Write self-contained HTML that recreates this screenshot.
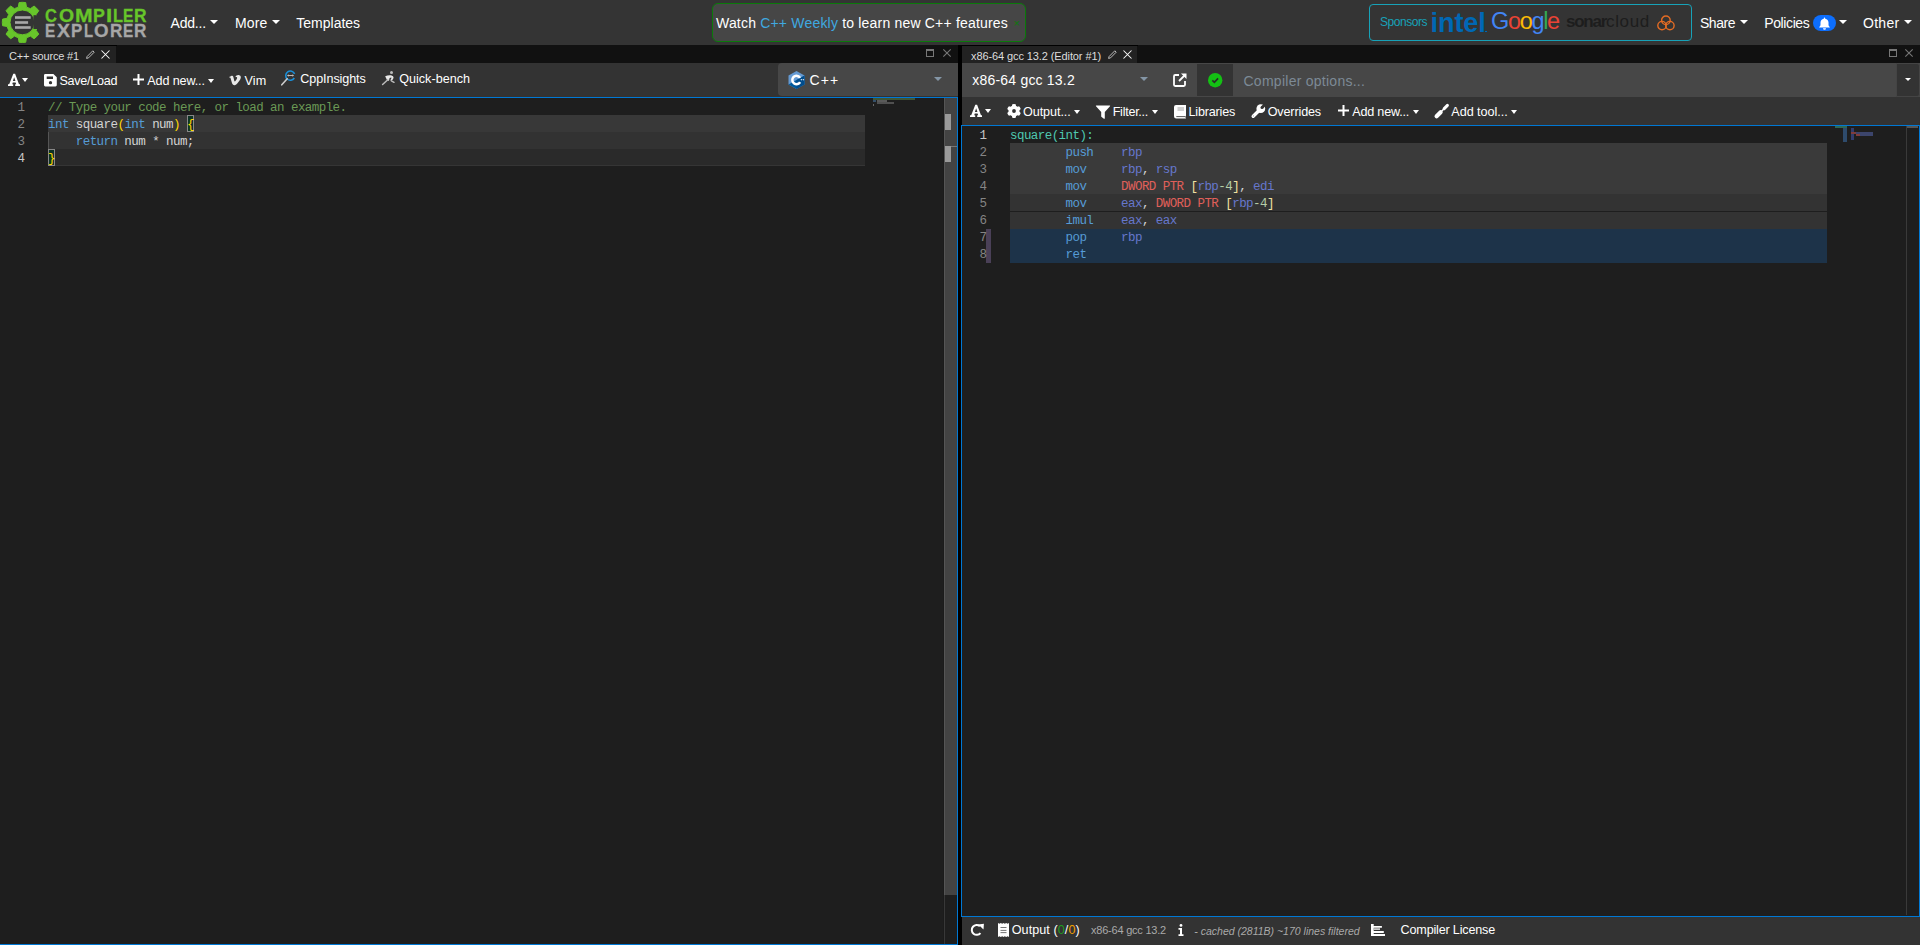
<!DOCTYPE html>
<html><head><meta charset="utf-8">
<style>
html,body{margin:0;padding:0}
body{width:1920px;height:945px;overflow:hidden;position:relative;background:#000;font-family:"Liberation Sans",sans-serif;color:#fff}
.a{position:absolute}
.t{position:absolute;white-space:pre;line-height:1}
.n14{font-size:14px}
.n12{font-size:12.6px}
.lg{font-size:18.5px;font-weight:700;transform-origin:0 0}
.car{position:absolute;width:0;height:0;border-left:4px solid transparent;border-right:4px solid transparent;border-top:4px solid #fff}
.code{position:absolute;font-family:"Liberation Mono",monospace;font-size:12.5px;letter-spacing:-0.56px;line-height:17px;white-space:pre;color:#d4d4d4}
.ln{position:absolute;font-family:"Liberation Mono",monospace;font-size:12.5px;line-height:17px;white-space:pre;color:#858585;text-align:right}
svg{position:absolute;overflow:visible}
</style></head><body>

<!-- NAVBAR -->
<div class="a" style="left:0;top:0;width:1920px;height:45px;background:#343434"></div>
<svg style="left:0;top:0" width="45" height="45" viewBox="0 0 45 45">
<path fill="#67c52a" stroke="#67c52a" stroke-width="1" stroke-linejoin="round" fill-rule="evenodd" d="M38.20,22.40 A15.8,15.8 0 0,0 36.08,14.50 L38.76,10.73 A20.1,20.1 0 0,0 34.07,6.04 L30.30,8.72 A15.8,15.8 0 0,0 26.49,7.14 L25.72,2.58 A20.1,20.1 0 0,0 19.08,2.58 L18.31,7.14 A15.8,15.8 0 0,0 14.50,8.72 L10.73,6.04 A20.1,20.1 0 0,0 6.04,10.73 L8.72,14.50 A15.8,15.8 0 0,0 7.14,18.31 L2.58,19.08 A20.1,20.1 0 0,0 2.58,25.72 L7.14,26.49 A15.8,15.8 0 0,0 8.72,30.30 L6.04,34.07 A20.1,20.1 0 0,0 10.73,38.76 L14.50,36.08 A15.8,15.8 0 0,0 18.31,37.66 L19.08,42.22 A20.1,20.1 0 0,0 25.72,42.22 L26.49,37.66 A15.8,15.8 0 0,0 30.30,36.08 L34.07,38.76 A20.1,20.1 0 0,0 38.76,34.07 L36.08,30.30 A15.8,15.8 0 0,0 38.20,22.40 Z M34.80,22.4 A12.4,12.4 0 1,1 10.00,22.4 A12.4,12.4 0 1,1 34.80,22.4 Z"/>
<rect x="33.5" y="15.2" width="10" height="13.8" fill="#343434"/>
<rect x="15" y="16.2" width="15.7" height="2.6" fill="#a8a8a8"/>
<rect x="15" y="21.2" width="13.1" height="2.6" fill="#a8a8a8"/>
<rect x="15" y="26.2" width="15.7" height="2.6" fill="#a8a8a8"/>
</svg>
<div class="t lg" style="left:45.44px;top:6.56px;color:#67c52a;-webkit-text-stroke:0.3px #67c52a;transform:scaleX(0.890)">C</div>
<div class="t lg" style="left:58.71px;top:6.56px;color:#67c52a;-webkit-text-stroke:0.3px #67c52a;transform:scaleX(1.051)">O</div>
<div class="t lg" style="left:75.07px;top:6.56px;color:#67c52a;-webkit-text-stroke:0.3px #67c52a;transform:scaleX(1.145)">M</div>
<div class="t lg" style="left:93.40px;top:6.56px;color:#67c52a;-webkit-text-stroke:0.3px #67c52a;transform:scaleX(0.958)">P</div>
<div class="t lg" style="left:106.23px;top:6.56px;color:#67c52a;-webkit-text-stroke:0.3px #67c52a;transform:scaleX(1.206)">I</div>
<div class="t lg" style="left:113.06px;top:6.56px;color:#67c52a;-webkit-text-stroke:0.3px #67c52a;transform:scaleX(0.881)">L</div>
<div class="t lg" style="left:122.97px;top:6.56px;color:#67c52a;-webkit-text-stroke:0.3px #67c52a;transform:scaleX(0.844)">E</div>
<div class="t lg" style="left:134.23px;top:6.56px;color:#67c52a;-webkit-text-stroke:0.3px #67c52a;transform:scaleX(0.939)">R</div>
<div class="t lg" style="left:44.95px;top:21.8px;color:#a6a6a6;-webkit-text-stroke:0.3px #a6a6a6;transform:scaleX(0.828)">E</div>
<div class="t lg" style="left:56.82px;top:21.8px;color:#a6a6a6;-webkit-text-stroke:0.3px #a6a6a6;transform:scaleX(1.051)">X</div>
<div class="t lg" style="left:71.39px;top:21.8px;color:#a6a6a6;-webkit-text-stroke:0.3px #a6a6a6;transform:scaleX(0.911)">P</div>
<div class="t lg" style="left:83.96px;top:21.8px;color:#a6a6a6;-webkit-text-stroke:0.3px #a6a6a6;transform:scaleX(0.807)">L</div>
<div class="t lg" style="left:94.04px;top:21.8px;color:#a6a6a6;-webkit-text-stroke:0.3px #a6a6a6;transform:scaleX(1.011)">O</div>
<div class="t lg" style="left:110.10px;top:21.8px;color:#a6a6a6;-webkit-text-stroke:0.3px #a6a6a6;transform:scaleX(0.928)">R</div>
<div class="t lg" style="left:122.95px;top:21.8px;color:#a6a6a6;-webkit-text-stroke:0.3px #a6a6a6;transform:scaleX(0.831)">E</div>
<div class="t lg" style="left:134.20px;top:21.8px;color:#a6a6a6;-webkit-text-stroke:0.3px #a6a6a6;transform:scaleX(0.928)">R</div>

<div class="t n14" style="left:170.5px;top:16.2px;letter-spacing:-0.18px">Add...</div>
<div class="car" style="left:210px;top:20px"></div>
<div class="t n14" style="left:235px;top:16.2px;letter-spacing:0.15px">More</div>
<div class="car" style="left:272px;top:20px"></div>
<div class="t n14" style="left:296.3px;top:16.2px">Templates</div>

<div class="a" style="left:712px;top:3px;width:312px;height:37px;border:1px solid #0a7a0a;border-radius:6px;background:#464646"></div>
<div class="t n14" style="left:716px;top:16.2px;letter-spacing:0.19px">Watch <span style="color:#3fa9e0">C++ Weekly</span> to learn new C++ features</div>
<div class="t" style="left:1013.5px;top:18px;font-size:11px;color:#0a7a0a">×</div>

<div class="a" style="left:1369px;top:4px;width:321px;height:35px;border:1px solid #17a2b8;border-radius:4px"></div>
<div class="t" style="left:1380px;top:15.6px;font-size:12px;color:#17a2b8;letter-spacing:-0.46px">Sponsors</div>
<div class="t" style="left:1430.5px;top:9.6px;font-size:27px;font-weight:700;color:#0068b5;letter-spacing:-0.05px">intel</div>
<div class="t" style="left:1491px;top:9.8px;font-size:23.5px;letter-spacing:-1.35px"><span style="color:#4285f4">G</span><span style="color:#ea4335">o</span><span style="color:#fbbc05">o</span><span style="color:#4285f4">g</span><span style="color:#34a853">l</span><span style="color:#ea4335">e</span></div>
<div class="a" style="left:1485px;top:30.8px;width:1.6px;height:1.6px;background:#0068b5"></div>
<div class="t" style="left:1566px;top:13.2px;font-size:17px;color:#1d1d1d"><span style="font-weight:700;letter-spacing:-1.26px">sonar</span><span style="letter-spacing:0.67px">cloud</span></div>

<svg style="left:1657px;top:14.5px" width="19" height="15" viewBox="0 0 19 15"><g fill="none" stroke="#e46c24" stroke-width="1.4"><circle cx="8.9" cy="5.3" r="4.3"/><circle cx="5" cy="10.6" r="4.2"/><circle cx="12.9" cy="10.6" r="4.2"/></g></svg>
<div class="t n14" style="left:1700px;top:16.2px;letter-spacing:-0.47px">Share</div>
<div class="car" style="left:1740px;top:20px"></div>
<div class="t n14" style="left:1764.3px;top:16.2px;letter-spacing:-0.4px">Policies</div>
<div class="a" style="left:1813px;top:15px;width:23px;height:16px;border-radius:8px;background:#0d6efd"></div>
<svg style="left:1818px;top:16.5px" width="13" height="13" viewBox="0 0 13 13"><path fill="#fff" d="M6.5,0.5 C6.9,0.5 7.2,0.8 7.2,1.2 V1.7 C9.2,2 10.5,3.6 10.5,5.6 V7.5 C10.5,8.5 11,9.4 11.8,10 V10.6 H1.2 V10 C2,9.4 2.5,8.5 2.5,7.5 V5.6 C2.5,3.6 3.8,2 5.8,1.7 V1.2 C5.8,0.8 6.1,0.5 6.5,0.5 Z M5,11.3 H8 A1.5,1.5 0 0 1 5,11.3 Z"/></svg>
<div class="car" style="left:1839px;top:20px"></div>
<div class="t n14" style="left:1863px;top:16.2px;letter-spacing:0.28px">Other</div>
<div class="car" style="left:1904px;top:20px"></div>

<!-- LEFT PANE -->
<div class="a" style="left:0;top:45px;width:958px;height:18px;background:#111"></div>
<div class="a" style="left:0;top:45px;width:117px;height:1px;background:#000"></div>
<div class="a" style="left:0;top:46px;width:116px;height:17px;background:#222"></div>
<div class="t" style="left:9px;top:50.7px;font-size:11px;color:#ddd;letter-spacing:-0.17px">C++ source #1</div>
<div class="a" style="left:0;top:63px;width:958px;height:34px;background:#333"></div>
<div class="a" style="left:778px;top:63px;width:180px;height:33px;background:#474747;border-radius:4px 0 0 4px"></div>


<!-- left toolbar -->
<svg style="left:7px;top:73px" width="14" height="14" viewBox="0 0 14 14"><path fill="#fff" fill-rule="evenodd" d="M6.3,0.8 L8.1,0.8 L12.0,11.2 L13.0,11.2 L13.0,13.0 L8.2,13.0 L8.2,11.2 L9.2,11.2 L8.6,9.4 L5.8,9.4 L5.2,11.2 L6.2,11.2 L6.2,13.0 L1.0,13.0 L1.0,11.2 L2.2,11.2 Z M5.9,8 L8.4,8 L7.15,4.3 Z"/></svg>
<div class="car" style="left:22px;top:78px;border-width:4px 3px 0 3px"></div>
<svg style="left:44px;top:73.8px" width="13" height="12.4" viewBox="0 0 13 12.4"><path fill="#fff" fill-rule="evenodd" d="M1.3,0 H9.4 L12.8,3.3 V11.1 A1.3,1.3 0 0 1 11.5,12.4 H1.3 A1.3,1.3 0 0 1 0,11.1 V1.3 A1.3,1.3 0 0 1 1.3,0 Z M2.7,2.4 V5.1 H9 V2.4 Z M6.5,7 A1.65,1.65 0 1 0 6.5,10.3 A1.65,1.65 0 1 0 6.5,7 Z"/></svg>
<div class="t n12" style="left:59.5px;top:74.9px;letter-spacing:-0.28px">Save/Load</div>
<svg style="left:133px;top:74px" width="11" height="11" viewBox="0 0 11 11"><path fill="#fff" d="M4.5,0 H6.5 V4.5 H11 V6.5 H6.5 V11 H4.5 V6.5 H0 V4.5 H4.5 Z"/></svg>
<div class="t n12" style="left:147.3px;top:75.0px;letter-spacing:-0.13px">Add new...</div>
<div class="car" style="left:208px;top:79px;border-width:4px 3px 0 3px"></div>
<svg style="left:229px;top:74.6px" width="12" height="10.4" viewBox="0 0 12 11" preserveAspectRatio="none"><path fill="#e8e8e8" d="M0.2,2.2 C1.5,1.2 2.6,0.6 3.2,0.7 C4.3,0.8 4.5,2.4 4.8,4 C5.1,5.7 5.4,6.8 5.9,6.8 C6.4,6.8 8,4.5 8.1,3.3 C8.2,2.1 7.3,1.9 6.3,2.4 C6.9,0.4 8.6,-0.2 10.3,0.2 C12,0.6 12.2,2.4 11.4,4.3 C10.4,6.6 7.6,10.5 5.6,10.9 C3.4,11.2 2.9,8.4 2.3,6.2 C1.8,4.2 1.6,2.6 1,2.6 C0.8,2.6 0.5,2.8 0.5,2.8 Z"/></svg>
<div class="t n12" style="left:244.4px;top:74.7px;letter-spacing:0.18px">Vim</div>
<svg style="left:281px;top:70px" width="15" height="16" viewBox="0 0 15 16"><path d="M13.6,3.9 A4.6,4.6 0 1 0 13.3,8" fill="none" stroke="#1a8fd8" stroke-width="1.6"/><path d="M7,5.5 H12 M7.3,4.6 L6.6,5.5 L7.3,6.4 M11.7,4.6 L12.4,5.5 L11.7,6.4" stroke="#ddd" stroke-width="0.8" fill="none"/><path d="M6.2,8.8 L0.8,14.8" stroke="#ccc" stroke-width="1.6" stroke-linecap="round"/></svg>
<div class="t n12" style="left:300.3px;top:73.0px;letter-spacing:-0.1px">CppInsights</div>
<svg style="left:378px;top:66px" width="22" height="24" viewBox="0 0 22 24"><circle cx="13.5" cy="6.4" r="1.5" fill="#bbb"/><path fill="#e8e8e8" d="M7.2,10.3 Q10,8.9 13,9.3 Q15.8,9.8 15.6,11.8 Q15.2,13.6 13.2,14.8 L12.2,14.2 Q13.6,12.8 13.4,11.6 L11.6,12 L11,14.8 L9.2,14.6 Q8.2,12.6 7.2,10.3 Z"/><path d="M9.8,13.8 L4.6,18.5 M13.4,14.8 L16,16.3" stroke="#bbb" stroke-width="1.5" stroke-linecap="round"/></svg>
<div class="t n12" style="left:399.2px;top:73.0px;letter-spacing:0.01px">Quick-bench</div>

<svg style="left:788px;top:71px" width="17" height="18" viewBox="0 0 17 18"><path fill="#659ad2" d="M8.5,0 L16.5,4.5 V13.5 L8.5,18 L0.5,13.5 V4.5 Z"/><path fill="#00599c" d="M16.5,4.5 V13.5 L8.5,18 L0.5,13.5 Z"/><path fill="#004482" d="M8.5,18 L16.5,13.5 V4.5 L8.5,9 Z" opacity="0.6"/><path fill="#fff" d="M8.5,3.6 A5.4,5.4 0 1 0 13.2,11.7 L11,10.4 A2.9,2.9 0 1 1 11,7.6 L13.2,6.3 A5.4,5.4 0 0 0 8.5,3.6 Z"/><path fill="#fff" d="M12.6,8.6 h0.5 v-0.5 h0.5 v0.5 h0.5 v0.5 h-0.5 v0.5 h-0.5 v-0.5 h-0.5 Z M14.6,8.6 h0.5 v-0.5 h0.5 v0.5 h0.5 v0.5 h-0.5 v0.5 h-0.5 v-0.5 h-0.5 Z"/></svg>
<div class="t n14" style="left:809.5px;top:72.9px;letter-spacing:1.16px">C++</div>
<div class="car" style="left:934px;top:77px;border-width:4px 4.5px 0 4.5px;border-top-color:#8496a6"></div>
<div class="a" style="left:926px;top:49px;width:6px;height:5px;border:1px solid #777;border-top-width:2px"></div>
<svg style="left:943px;top:49px" width="8" height="8" viewBox="0 0 8 8"><path d="M0.3,0.3 L7.7,7.7 M7.7,0.3 L0.3,7.7" stroke="#777" stroke-width="1.1"/></svg>
<svg style="left:86px;top:49.5px" width="9" height="9" viewBox="0 0 9 9"><path d="M6.8,0.8 L8.2,2.2 L2.5,7.9 L0.6,8.4 L1.1,6.5 Z" fill="none" stroke="#ccc" stroke-width="0.9"/></svg>
<svg style="left:101px;top:50px" width="9" height="9" viewBox="0 0 9 9"><path d="M0.5,0.5 L8.5,8.5 M8.5,0.5 L0.5,8.5" stroke="#fff" stroke-width="1.05"/></svg>

<!-- left editor -->
<div class="a" style="left:-1px;top:97px;width:957px;height:846px;border:1px solid #0078d4;background:#1e1e1e"></div>


<!-- left code -->
<div class="a" style="left:48px;top:115px;width:817px;height:17px;background:#383838"></div>
<div class="a" style="left:48px;top:132px;width:817px;height:17px;background:#323232"></div>
<div class="a" style="left:48px;top:149px;width:817px;height:16px;background:#2a2a2a;border-bottom:1px solid #353535"></div>
<div class="a" style="left:48px;top:132px;width:1px;height:17px;background:#555"></div>
<div class="a" style="left:187px;top:115px;width:5px;height:15px;border:1px solid #888;background:#0f3325"></div>
<div class="a" style="left:48px;top:149px;width:5px;height:15px;border:1px solid #888;background:#0f3325"></div>
<div class="ln" style="left:0;top:100.2px;width:25px">1
2
3
<span style="color:#c6c6c6">4</span></div>
<div class="code" style="left:48px;top:100.2px"><span style="color:#6a9955">// Type your code here, or load an example.</span>
<span style="color:#569cd6">int</span> square<span style="color:#ffd700">(</span><span style="color:#569cd6">int</span> num<span style="color:#ffd700">)</span> <span style="color:#ffd700">{</span>
    <span style="color:#569cd6">return</span> num * num;
<span style="color:#ffd700">}</span></div>
<!-- left minimap + scrollbar -->
<div class="a" style="left:944px;top:98px;width:13px;height:797px;background:#434343"></div>
<div class="a" style="left:943px;top:98px;width:1px;height:846px;background:#1b1b1b"></div>
<div class="a" style="left:944px;top:98px;width:1px;height:797px;background:#555"></div>
<div class="a" style="left:944px;top:895px;width:1px;height:49px;background:#383838"></div>
<div class="a" style="left:945px;top:114px;width:6px;height:16px;background:#9a9a9a"></div>
<div class="a" style="left:945px;top:146px;width:6px;height:16px;background:#9a9a9a"></div>
<div class="a" style="left:951px;top:146px;width:6px;height:1px;background:#777"></div>
<div class="a" style="left:873px;top:98px;width:42px;height:2px;background:#3f5535"></div>
<div class="a" style="left:873px;top:100px;width:3px;height:2px;background:#35506a"></div>
<div class="a" style="left:877px;top:100px;width:10px;height:2px;background:#5a5a5a"></div>
<div class="a" style="left:877px;top:102px;width:17px;height:2px;background:#505050"></div>
<div class="a" style="left:873px;top:104px;width:1px;height:2px;background:#666"></div>
<!-- splitter -->
<div class="a" style="left:958px;top:45px;width:4px;height:900px;background:#000"></div>

<!-- RIGHT PANE -->
<div class="a" style="left:962px;top:45px;width:958px;height:18px;background:#111"></div>
<div class="a" style="left:962px;top:45px;width:176px;height:1px;background:#000"></div>
<div class="a" style="left:962px;top:46px;width:175px;height:17px;background:#222"></div>
<div class="t" style="left:971px;top:50.5px;font-size:11px;color:#ddd;letter-spacing:-0.1px">x86-64 gcc 13.2 (Editor #1)</div>
<div class="a" style="left:962px;top:63px;width:958px;height:34px;background:#474747"></div>
<div class="a" style="left:962px;top:97px;width:958px;height:28px;background:#333"></div>

<!-- right tab icons -->
<svg style="left:1108px;top:49.5px" width="9" height="9" viewBox="0 0 9 9"><path d="M6.8,0.8 L8.2,2.2 L2.5,7.9 L0.6,8.4 L1.1,6.5 Z" fill="none" stroke="#ccc" stroke-width="0.9"/></svg>
<svg style="left:1123px;top:50px" width="9" height="9" viewBox="0 0 9 9"><path d="M0.5,0.5 L8.5,8.5 M8.5,0.5 L0.5,8.5" stroke="#fff" stroke-width="1.05"/></svg>
<div class="a" style="left:1889px;top:49px;width:6px;height:5px;border:1px solid #777;border-top-width:2px"></div>
<svg style="left:1905px;top:49px" width="8" height="8" viewBox="0 0 8 8"><path d="M0.3,0.3 L7.7,7.7 M7.7,0.3 L0.3,7.7" stroke="#777" stroke-width="1.1"/></svg>
<!-- compiler bar -->
<div class="t n14" style="left:972.3px;top:72.9px;letter-spacing:0.2px">x86-64 gcc 13.2</div>
<div class="car" style="left:1140px;top:77px;border-width:4px 4px 0 4px;border-top-color:#8496a6"></div>
<svg style="left:1173px;top:73px" width="14" height="14" viewBox="0 0 14 14"><path d="M6,2 H2.2 A1.2,1.2 0 0 0 1,3.2 V11.8 A1.2,1.2 0 0 0 2.2,13 H10.8 A1.2,1.2 0 0 0 12,11.8 V8" fill="none" stroke="#fff" stroke-width="1.8"/><path d="M8,0.5 H13.5 V6 Z" fill="#fff"/><path d="M12.5,1.5 L6,8" stroke="#fff" stroke-width="1.8"/></svg>
<div class="a" style="left:1197px;top:64px;width:36px;height:32px;background:#333"></div>
<svg style="left:1208px;top:72.8px" width="14.4" height="14.4" viewBox="0 0 14 14"><circle cx="7" cy="7" r="7" fill="#14c014"/><path d="M4.2,7.2 L6.2,9 L9.8,5.2" fill="none" stroke="#2a2a2a" stroke-width="1.6"/></svg>
<div class="t n14" style="left:1243.5px;top:73.8px;letter-spacing:0.26px;color:#7d8a96">Compiler options...</div>
<div class="a" style="left:1896px;top:63px;width:22px;height:32px;background:#333;border:1px solid #444;border-radius:0 3px 3px 0"></div>
<div class="car" style="left:1905px;top:78px;border-width:3.5px 3.5px 0 3.5px"></div>
<!-- toolbar 2 -->
<svg style="left:969px;top:104px" width="14" height="14" viewBox="0 0 14 14"><path fill="#fff" fill-rule="evenodd" d="M6.3,0.8 L8.1,0.8 L12.0,11.2 L13.0,11.2 L13.0,13.0 L8.2,13.0 L8.2,11.2 L9.2,11.2 L8.6,9.4 L5.8,9.4 L5.2,11.2 L6.2,11.2 L6.2,13.0 L1.0,13.0 L1.0,11.2 L2.2,11.2 Z M5.9,8 L8.4,8 L7.15,4.3 Z"/></svg>
<div class="car" style="left:985px;top:109px;border-width:4px 3px 0 3px"></div>
<svg style="left:1006.5px;top:104px" width="14" height="14" viewBox="0 0 14 14"><path fill="#fff" fill-rule="evenodd" d="M9.06,1.90 L8.69,0.21 A7.0,7.0 0 0,0 5.31,0.21 L4.94,1.90 A5.5,5.5 0 0,0 3.61,2.67 L1.96,2.14 A7.0,7.0 0 0,0 0.27,5.07 L1.55,6.23 A5.5,5.5 0 0,0 1.55,7.77 L0.27,8.93 A7.0,7.0 0 0,0 1.96,11.86 L3.61,11.33 A5.5,5.5 0 0,0 4.94,12.10 L5.31,13.79 A7.0,7.0 0 0,0 8.69,13.79 L9.06,12.10 A5.5,5.5 0 0,0 10.39,11.33 L12.04,11.86 A7.0,7.0 0 0,0 13.73,8.93 L12.45,7.77 A5.5,5.5 0 0,0 12.45,6.23 L13.73,5.07 A7.0,7.0 0 0,0 12.04,2.14 L10.39,2.67 A5.5,5.5 0 0,0 9.06,1.90 Z M8.9,7 A1.9,1.9 0 1,1 5.1,7 A1.9,1.9 0 1,1 8.9,7 Z"/></svg>
<div class="t n12" style="left:1023px;top:106.1px;letter-spacing:-0.07px">Output...</div>
<div class="car" style="left:1073.5px;top:110px;border-width:4px 3px 0 3px"></div>
<svg style="left:1096px;top:104.8px" width="14" height="14" viewBox="0 0 14 14"><path fill="#fff" d="M0.3,0.5 H13.7 A0.5,0.5 0 0 1 14,1.3 L8.8,7 V13.2 A0.6,0.6 0 0 1 7.9,13.7 L5.6,12 A0.8,0.8 0 0 1 5.2,11.3 V7 L0,1.3 A0.5,0.5 0 0 1 0.3,0.5 Z"/></svg>
<div class="t n12" style="left:1112.7px;top:106.1px;letter-spacing:-0.27px">Filter...</div>
<div class="car" style="left:1152px;top:110px;border-width:4px 3px 0 3px"></div>
<svg style="left:1174px;top:104.5px" width="12" height="13.5" viewBox="0 0 12 13.5"><path fill="#fff" d="M2,0 H12 V10.6 A1,1 0 0 1 11.4,11.5 V12.5 A0.6,0.6 0 0 1 11.9,13 V13.5 H2.2 A2.2,2.2 0 0 1 0,11.3 V2 A2,2 0 0 1 2,0 Z"/><path d="M3.5,3 H10 M3.5,5 H10" stroke="#999" stroke-width="0.9"/><path d="M2.3,11.6 H11.2" stroke="#444" stroke-width="0.9"/></svg>
<div class="t n12" style="left:1188.5px;top:106.1px;letter-spacing:-0.19px">Libraries</div>
<svg style="left:1246px;top:100px" width="24" height="22" viewBox="0 0 24 22"><circle cx="14.8" cy="8.7" r="4.4" fill="#fff"/><path d="M13.6,10 L7.2,16.2" stroke="#fff" stroke-width="3.4" stroke-linecap="round"/><circle cx="16" cy="7.5" r="1.5" fill="#333"/><path d="M16,7.5 L20,3.5" stroke="#333" stroke-width="3"/><circle cx="7.4" cy="15.9" r="0.6" fill="#aaa"/></svg>
<div class="t n12" style="left:1267.7px;top:106.1px;letter-spacing:-0.14px">Overrides</div>
<svg style="left:1338px;top:105px" width="11" height="11" viewBox="0 0 11 11"><path fill="#fff" d="M4.5,0 H6.5 V4.5 H11 V6.5 H6.5 V11 H4.5 V6.5 H0 V4.5 H4.5 Z"/></svg>
<div class="t n12" style="left:1352.3px;top:106.1px;letter-spacing:-0.21px">Add new...</div>
<div class="car" style="left:1413px;top:110px;border-width:4px 3px 0 3px"></div>
<svg style="left:1430px;top:100px" width="24" height="22" viewBox="0 0 24 22"><path d="M6.6,16.2 L10.6,12.2" stroke="#fff" stroke-width="4.2" stroke-linecap="round"/><path d="M10.6,12.2 L14,8.8" stroke="#fff" stroke-width="1.6"/><path d="M14.2,8.6 L17.4,5.4" stroke="#fff" stroke-width="3" stroke-linecap="round"/></svg>
<div class="t n12" style="left:1451.3px;top:106.1px;letter-spacing:-0.02px">Add tool...</div>
<div class="car" style="left:1511px;top:110px;border-width:4px 3px 0 3px"></div>

<div class="a" style="left:961px;top:125px;width:957px;height:790px;border:1px solid #0078d4;background:#1e1e1e"></div>
<div class="a" style="left:962px;top:917px;width:958px;height:28px;background:#333"></div>


<!-- asm -->
<div class="a" style="left:1010px;top:143px;width:817px;height:51px;background:#3a3a3a"></div>
<div class="a" style="left:1010px;top:194px;width:817px;height:17px;background:#333"></div>
<div class="a" style="left:1010px;top:211px;width:817px;height:1px;background:#1e1e1e"></div>
<div class="a" style="left:1010px;top:212px;width:817px;height:17px;background:#333"></div>
<div class="a" style="left:1010px;top:229px;width:817px;height:34px;background:#1d3349"></div>
<div class="a" style="left:986px;top:229px;width:5px;height:34px;background:#4a4057"></div>
<div class="ln" style="left:962px;top:128.2px;width:25px;color:#858585"><span style="color:#c6c6c6">1</span>
2
3
4
5
6
7
8</div>
<div class="code" style="left:1010px;top:128.2px"><span style="color:#4ec9b0">square(int):</span>
        <span style="color:#569cd6">push</span>    <span style="color:#6677cc">rbp</span>
        <span style="color:#569cd6">mov</span>     <span style="color:#6677cc">rbp</span>, <span style="color:#6677cc">rsp</span>
        <span style="color:#569cd6">mov</span>     <span style="color:#e0605a">DWORD PTR</span> <span style="color:#f0e0a0">[</span><span style="color:#6677cc">rbp</span><span style="color:#b5cea8">-4</span><span style="color:#f0e0a0">]</span>, <span style="color:#6677cc">edi</span>
        <span style="color:#569cd6">mov</span>     <span style="color:#6677cc">eax</span>, <span style="color:#e0605a">DWORD PTR</span> <span style="color:#f0e0a0">[</span><span style="color:#6677cc">rbp</span><span style="color:#b5cea8">-4</span><span style="color:#f0e0a0">]</span>
        <span style="color:#569cd6">imul</span>    <span style="color:#6677cc">eax</span>, <span style="color:#6677cc">eax</span>
        <span style="color:#569cd6">pop</span>     <span style="color:#6677cc">rbp</span>
        <span style="color:#569cd6">ret</span></div>
<!-- right minimap / scrollbar -->
<div class="a" style="left:1906px;top:126px;width:1px;height:789px;background:#3a3a3a"></div>
<div class="a" style="left:1907px;top:126px;width:11px;height:2px;background:#555"></div>
<div style="position:absolute;left:0;top:0;opacity:0.6">
<div class="a" style="left:1835px;top:126px;width:12px;height:2px;background:#3a9a7a"></div>
<div class="a" style="left:1843px;top:128px;width:4px;height:14px;background:#3a6aa0"></div>
<div class="a" style="left:1851px;top:128px;width:3px;height:12px;background:#4050a0"></div>
<div class="a" style="left:1851px;top:132px;width:5px;height:1.5px;background:#c05050"></div>
<div class="a" style="left:1856px;top:134px;width:4px;height:1.5px;background:#c05050"></div>
<div class="a" style="left:1856px;top:132px;width:17px;height:1.5px;background:#5060a0"></div>
<div class="a" style="left:1860px;top:134px;width:13px;height:1.5px;background:#5060a0"></div>
</div>
<!-- status bar -->
<svg style="left:970px;top:923px" width="14" height="14" viewBox="0 0 14 14"><path d="M10.45,10.05 A4.9,4.9 0 1 1 9.85,3.15" fill="none" stroke="#fff" stroke-width="2"/><path d="M8.2,1.6 L13.9,0.8 L13.5,6.6 Z" fill="#fff"/></svg>
<svg style="left:998px;top:923px" width="11" height="14" viewBox="0 0 11 14"><path fill="#fff" d="M0,0 L1.4,0.8 L2.8,0 L4.2,0.8 L5.5,0 L6.8,0.8 L8.2,0 L9.6,0.8 L11,0 V14 L9.6,13.2 L8.2,14 L6.8,13.2 L5.5,14 L4.2,13.2 L2.8,14 L1.4,13.2 L0,14 Z"/><path d="M2.5,4.5 H8.5 M2.5,7.4 H8.5 M2.5,9.6 H8.5" stroke="#666" stroke-width="0.9"/></svg>
<div class="t n12" style="left:1011.7px;top:924.3px;letter-spacing:0.07px">Output (<span style="color:#1f9d1f">0</span>/<span style="color:#f0a000">0</span>)</div>
<div class="t" style="left:1091px;top:925.1px;font-size:11px;color:#aaa;letter-spacing:-0.22px">x86-64 gcc 13.2</div>
<svg style="left:1178px;top:924.4px" width="6" height="12" viewBox="0 0 6 12"><circle cx="3" cy="1.4" r="1.4" fill="#fff"/><path fill="#fff" d="M0.5,4 H4 V10.2 H5.5 V12 H0.5 V10.2 H2 V5.8 H0.5 Z"/></svg>
<div class="t" style="left:1194.3px;top:925.6px;font-size:10.5px;font-style:italic;color:#aaa">- cached (2811B) ~170 lines filtered</div>
<svg style="left:1371px;top:924px" width="14" height="12" viewBox="0 0 14 12"><path fill="#fff" d="M0,0 H2.7 V10.1 H14 V12 H0 Z M2.7,1.9 H10.9 V3.7 H2.7 Z M2.7,7 H12.8 V9 H2.7 Z"/><path fill="#ddd" d="M2.7,4.3 H9 V5.9 H2.7 Z"/></svg>
<div class="t n12" style="left:1400.6px;top:924.3px;letter-spacing:-0.18px">Compiler License</div>

</body></html>
